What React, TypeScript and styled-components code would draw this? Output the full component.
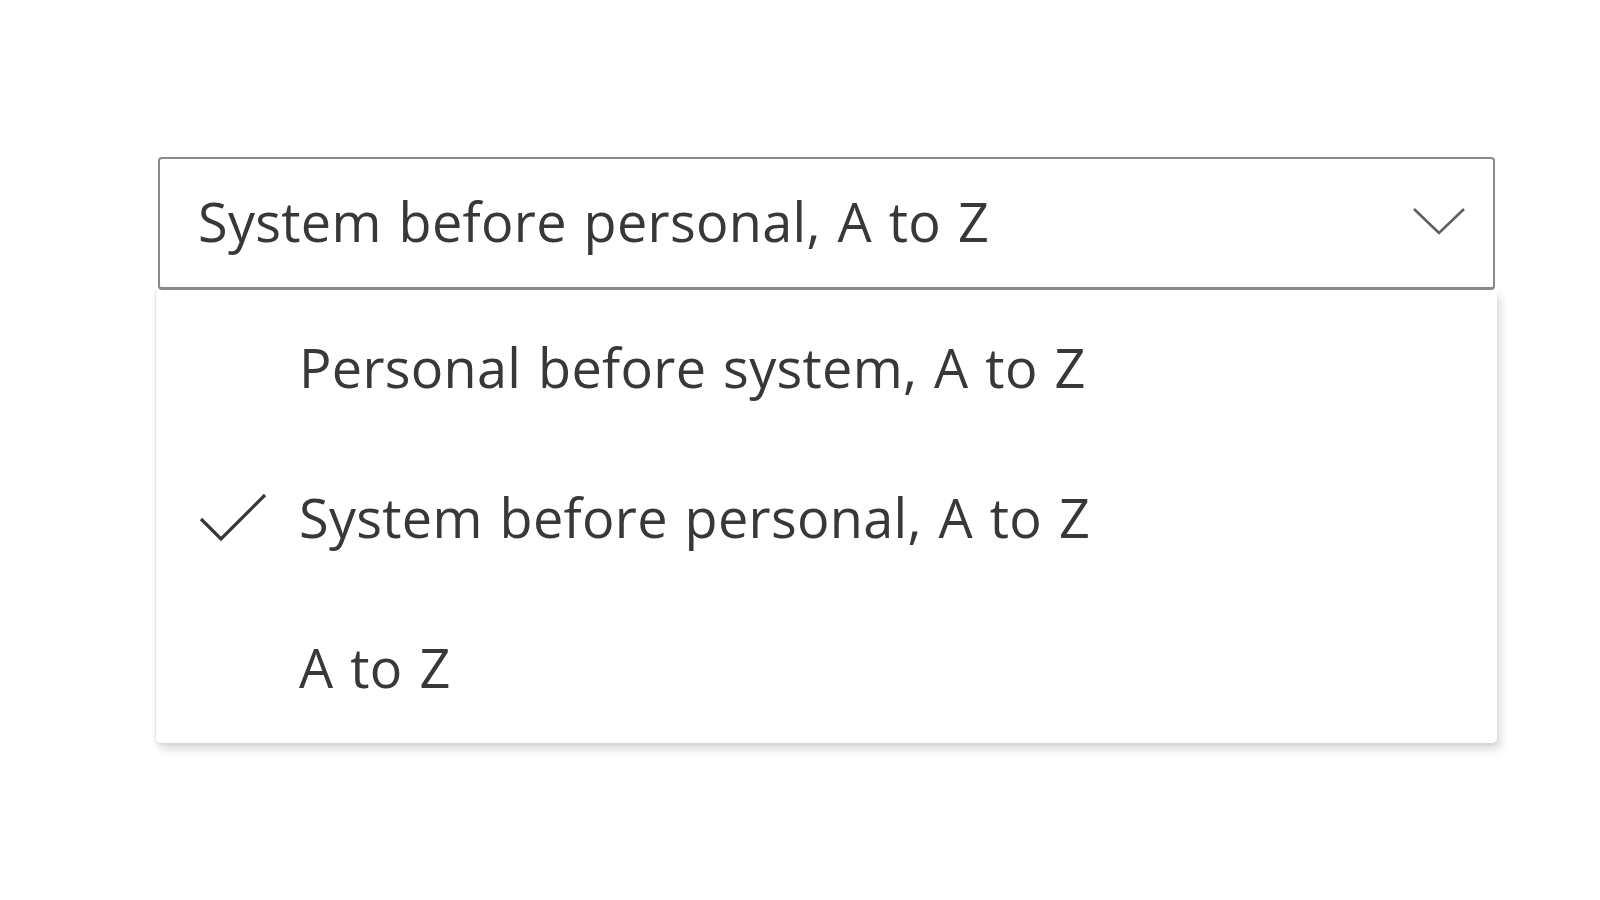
import React from "react";
import styled, { createGlobalStyle } from "styled-components";

const Global = createGlobalStyle`
  html, body { margin: 0; padding: 0; background: #ffffff; }
  body { font-family: "Open Sans", "Noto Sans", sans-serif; }
`;

const Page = styled.div`
  width: 1600px;
  height: 900px;
  box-sizing: border-box;
  padding: 157px 0 0 155px;
  background: #ffffff;
`;

const Combo = styled.div`
  width: 1342px;
  display: flex;
  flex-direction: column;
`;

const Trigger = styled.div`
  box-sizing: border-box;
  margin-left: 3px;
  width: 1337px;
  height: 133px;
  border: 2px solid #8a8a8a;
  border-bottom-width: 3px;
  border-radius: 4px;
  display: flex;
  align-items: center;
  justify-content: space-between;
  padding: 0 27px 4px 38px;
  background: #fff;
`;

const Label = styled.span`
  font-size: 54px;
  color: #383838;
  letter-spacing: 0.3px;
  word-spacing: 2.5px;
  white-space: nowrap;
`;

const Menu = styled.ul`
  list-style: none;
  margin: 0;
  padding: 2px 0 0 0;
  box-sizing: border-box;
  width: 1342px;
  height: 453px;
  background: #fff;
  border-radius: 0 0 5px 5px;
  border-left: 1px solid #e6e6e6;
  box-shadow: 4px 7px 9px rgba(0, 0, 0, 0.13), 0 2px 3px rgba(0, 0, 0, 0.06);
`;

const Item = styled.li`
  height: 150px;
  display: flex;
  align-items: center;
  padding-left: 43px;
`;

const CheckSlot = styled.span`
  width: 100px;
  height: 60px;
  display: flex;
  align-items: center;
  flex-shrink: 0;
`;

const ItemText = styled.span`
  font-size: 54px;
  color: #383838;
  letter-spacing: 0.3px;
  word-spacing: 2.5px;
  white-space: nowrap;
`;

const Chevron = () => (
  <svg width="54" height="30" viewBox="0 0 54 30" fill="none">
    <polyline points="2,3 27,27 52,3" stroke="#5f5f5f" strokeWidth="2.6" strokeLinejoin="miter" />
  </svg>
);

const Check = () => (
  <svg width="68" height="50" viewBox="0 0 68 50" fill="none">
    <polyline points="2,27 22,47 66,3" stroke="#383838" strokeWidth="3.2" />
  </svg>
);

const options = [
  { label: "Personal before system, A to Z", selected: false },
  { label: "System before personal, A to Z", selected: true },
  { label: "A to Z", selected: false },
];

export default function App() {
  return (
    <>
      <Global />
      <Page>
        <Combo>
          <Trigger>
            <Label>System before personal, A to Z</Label>
            <Chevron />
          </Trigger>
          <Menu>
            {options.map((o) => (
              <Item key={o.label}>
                <CheckSlot>{o.selected && <Check />}</CheckSlot>
                <ItemText>{o.label}</ItemText>
              </Item>
            ))}
          </Menu>
        </Combo>
      </Page>
    </>
  );
}
